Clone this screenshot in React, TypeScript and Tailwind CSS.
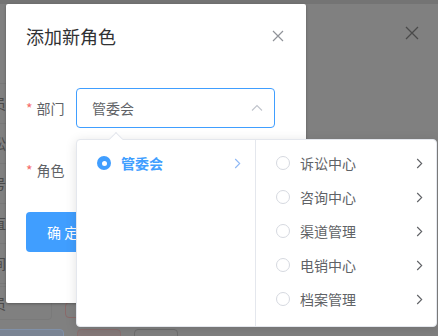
import React from "react";

const FONT = '"Noto Sans CJK SC", "Noto Sans", "Liberation Sans", sans-serif';

function ChevronRight({ color }: { color: string }) {
  return (
    <svg width="7" height="11" viewBox="0 0 7 11" fill="none">
      <path d="M1.2 1 L5.7 5.5 L1.2 10" stroke={color} strokeWidth="1.1" />
    </svg>
  );
}

function Radio({ checked }: { checked?: boolean }) {
  return checked ? (
    <span className="flex h-[14px] w-[14px] shrink-0 items-center justify-center rounded-full bg-[#409eff]">
      <span className="h-[5px] w-[5px] rounded-full bg-white" />
    </span>
  ) : (
    <span className="h-[14px] w-[14px] shrink-0 rounded-full border border-[#d6d9e0] bg-white" />
  );
}

const rightItems = ["诉讼中心", "咨询中心", "渠道管理", "电销中心", "档案管理", "客服中心"];
const bgRows = ["员", "讼", "号", "直", "间", "案管理员"];

export default function App() {
  return (
    <div
      className="relative h-[336px] w-[438px] overflow-hidden bg-[#808080]"
      style={{ fontFamily: FONT }}
    >
      {/* underlying page */}
      <div className="absolute inset-x-0 top-0 h-[4px] bg-[#747474]" />
      <div className="absolute left-[404px] top-[25px]">
        <svg width="16" height="16" viewBox="0 0 16 16" fill="none">
          <path d="M2 2 L14 14 M14 2 L2 14" stroke="#4a4a4a" strokeWidth="1.3" />
        </svg>
      </div>
      <div className="absolute left-[-50px] top-[83px] flex w-[56px] flex-col">
        {bgRows.map((r, i) => (
          <div
            key={i}
            className="flex h-[40px] items-center justify-end whitespace-nowrap border-t border-[#787878] text-[14px] text-[#4a4a4a]"
          >
            {r}
          </div>
        ))}
      </div>
      <div className="absolute left-[-40px] top-[286px] h-[34px] w-[92px] rounded-[4px] border border-[#7a7a7a]" />
      <div className="absolute left-[65px] top-[302px] h-[16px] w-[40px] rounded-[4px] border border-[#8a6a6a]" />
      <div className="absolute left-[-10px] top-[329px] h-[20px] w-[74px] rounded-[4px] border border-[#8090a8] bg-[#7a8494]" />
      <div className="absolute left-[77px] top-[329px] h-[20px] w-[44px] rounded-[4px] border border-[#8a6f6f] bg-[#857979]" />
      <div className="absolute left-[134px] top-[329px] h-[20px] w-[44px] rounded-[4px] border border-[#6e6e6e]" />

      {/* dialog */}
      <div className="absolute left-[6px] top-[4px] h-[299px] w-[300px] rounded-[2px] bg-white shadow-[0_1px_3px_rgba(0,0,0,0.3)]">
        <div className="relative px-5 pb-[10px] pt-5">
          <span className="block text-[18px] leading-6 text-[#303133]">添加新角色</span>
          <span className="absolute right-5 top-[24px]">
            <svg width="16" height="16" viewBox="0 0 16 16" fill="none">
              <path d="M3 3 L13 13 M13 3 L3 13" stroke="#909399" strokeWidth="1.2" />
            </svg>
          </span>
        </div>
        <div className="flex flex-col gap-[22px] px-5 pt-[30px]">
          <div className="flex h-10 items-center">
            <label className="w-[50px] shrink-0 whitespace-nowrap text-[14px] text-[#606266]">
              <span className="mr-1 text-[#f56c6c]">*</span>部门
            </label>
            <div className="flex h-10 w-[199px] shrink-0 items-center justify-between rounded-[4px] border border-[#409eff] pl-[15px] pr-[11px]">
              <span className="text-[14px] text-[#606266]">管委会</span>
              <svg width="12" height="8" viewBox="0 0 12 8" fill="none">
                <path d="M1 6.5 L6 1.5 L11 6.5" stroke="#c0c4cc" strokeWidth="1.1" />
              </svg>
            </div>
          </div>
          <div className="flex h-10 items-center">
            <label className="w-[50px] shrink-0 whitespace-nowrap text-[14px] text-[#606266]">
              <span className="mr-1 text-[#f56c6c]">*</span>角色
            </label>
          </div>
          <div className="flex">
            <button className="h-10 whitespace-nowrap rounded-[4px] bg-[#409eff] px-[21px] text-[14px] text-white">
              确 定
            </button>
          </div>
        </div>
      </div>

      {/* cascader dropdown */}
      <div className="absolute left-[76px] top-[139px] flex h-[188px] w-[361px] rounded-[4px] border border-[#e4e7ed] bg-white shadow-[0_2px_12px_rgba(0,0,0,0.12)]">
        <div className="absolute left-[34px] top-[-6px] h-[10px] w-[10px] rotate-45 border-l border-t border-[#e4e7ed] bg-white" />
        <div className="relative w-[179px] border-r border-[#e4e7ed] py-[6px]">
          <div className="flex h-[34px] items-center pl-[20px] pr-[14px]">
            <Radio checked />
            <span className="ml-[10px] flex-1 text-[14px] font-bold text-[#409eff]">管委会</span>
            <ChevronRight color="#8fb8f5" />
          </div>
        </div>
        <div className="relative flex-1 overflow-hidden py-[6px]">
          {rightItems.map((t) => (
            <div key={t} className="flex h-[34px] items-center pl-[20px] pr-[13px]">
              <Radio />
              <span className="ml-[10px] flex-1 text-[14px] text-[#606266]">{t}</span>
              <ChevronRight color="#606266" />
            </div>
          ))}
        </div>
      </div>
    </div>
  );
}
